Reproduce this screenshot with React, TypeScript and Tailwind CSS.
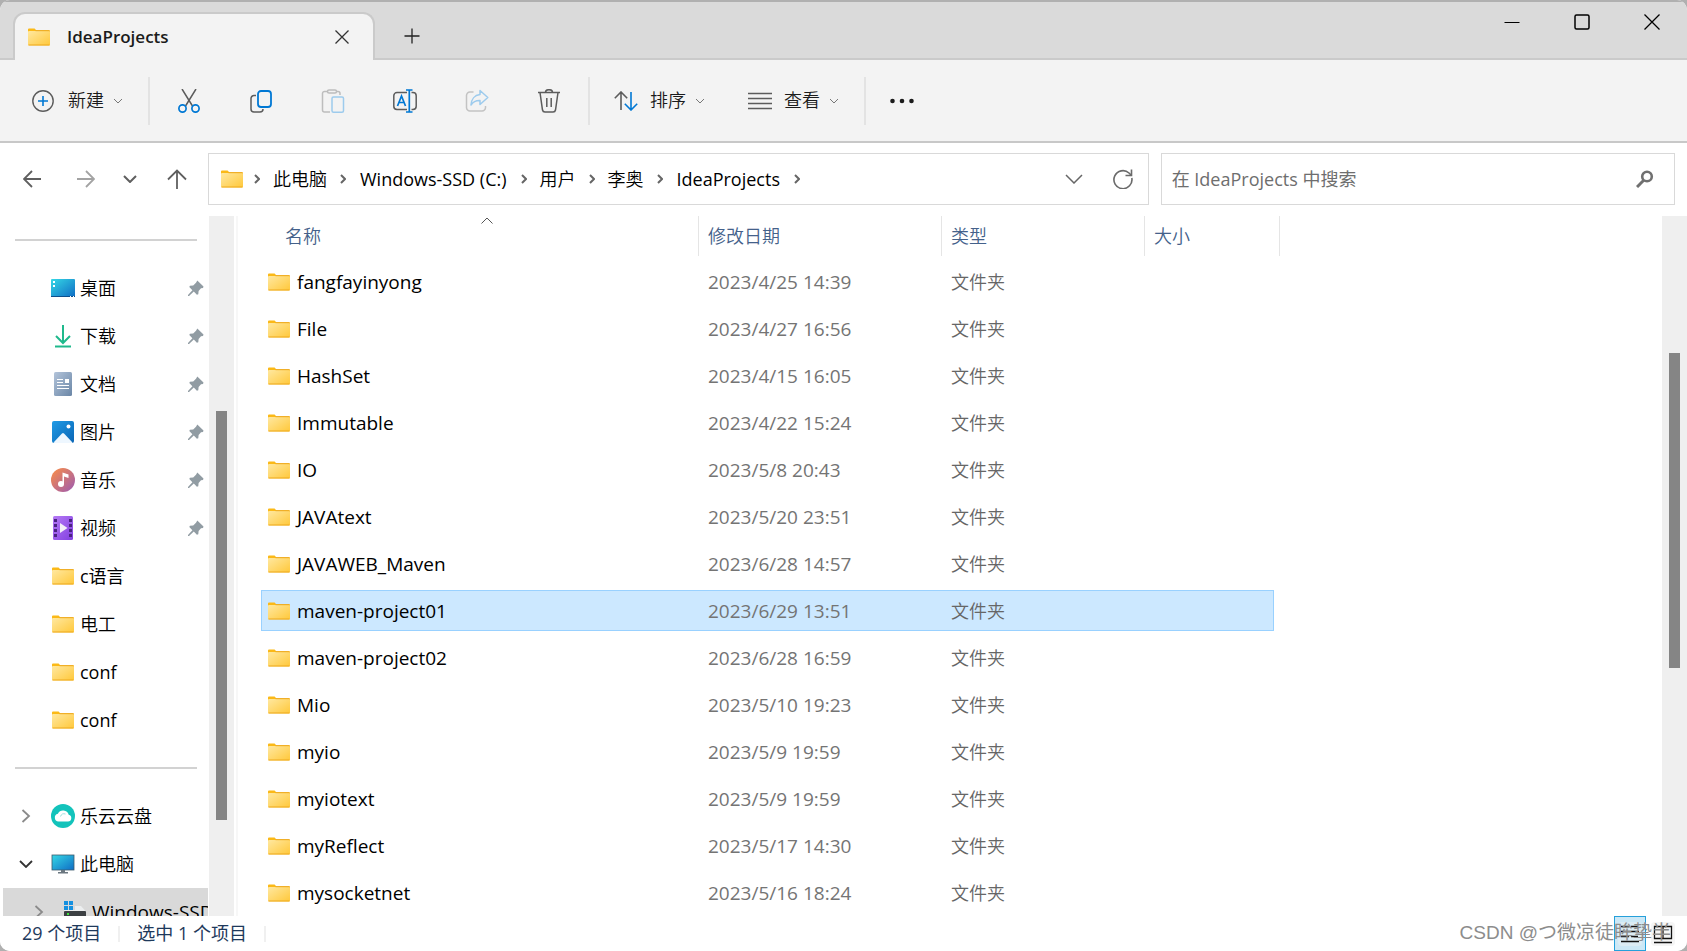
import React, { useState } from 'react';

const files = [
   { name: 'fangfayinyong', date: '2023/4/25 14:39' },
   { name: 'File', date: '2023/4/27 16:56' },
   { name: 'HashSet', date: '2023/4/15 16:05' },
   { name: 'Immutable', date: '2023/4/22 15:24' },
   { name: 'IO', date: '2023/5/8 20:43' },
   { name: 'JAVAtext', date: '2023/5/20 23:51' },
   { name: 'JAVAWEB_Maven', date: '2023/6/28 14:57' },
   { name: 'maven-project01', date: '2023/6/29 13:51' },
   { name: 'maven-project02', date: '2023/6/28 16:59' },
   { name: 'Mio', date: '2023/5/10 19:23' },
   { name: 'myio', date: '2023/5/9 19:59' },
   { name: 'myiotext', date: '2023/5/9 19:59' },
   { name: 'myReflect', date: '2023/5/17 14:30' },
   { name: 'mysocketnet', date: '2023/5/16 18:24' },
];

const FolderIcon = () => (
   <svg width="22" height="18" viewBox="0 0 22 18" className="shrink-0">
      <defs>
         <linearGradient id="folder" x1="0" y1="0" x2="1" y2="1">
            <stop offset="0" stopColor="#ffe8a0" />
            <stop offset="1" stopColor="#ffc83a" />
         </linearGradient>
      </defs>
      <path d="M0 1.5Q0 .5 1 .5h5.6l1.6 1.7H21q1 0 1 1V6H0z" fill="#fbb917" />
      <rect y="3" width="22" height="14.5" rx="1" fill="url(#folder)" />
      <path d="M7.5 2.7H21.5" stroke="#eda91f" />
      <path d="M.5 17h21" stroke="#eda91f" />
   </svg>
);

const PinIcon = () => (
   <svg width="16" height="16" viewBox="0 0 16 16" className="ml-auto shrink-0">
      <path d="M9.3.5 15.5 6.6 15 8l-2 .3-2.4 2.6-.3 3.3-1.4.5-3.1-3.1L1 16H0v-1l4.4-4.8L1.3 7.1l.6-1.4 3.3-.3L8 2.8z" fill="#919ca3" />
   </svg>
);

const DesktopIcon = () => (
   <svg width="24" height="18" viewBox="0 0 24 18">
      <defs>
         <linearGradient id="desk" x1="0" y1="0" x2="1" y2="1">
            <stop offset="0" stopColor="#35d8e6" />
            <stop offset="1" stopColor="#0f6cc4" />
         </linearGradient>
      </defs>
      <rect width="24" height="18" rx="1" fill="url(#desk)" />
      <path d="M0 17h24v1H0z" fill="#0d4f8c" />
      <path d="M2 2h2v2H2zM2 6h2v2H2zM19 17h1v1h-1zM22 17h1v1h-1z" fill="#fff" />
   </svg>
);

const DownloadIcon = () => (
   <svg width="24" height="24" viewBox="0 0 24 24" fill="none" stroke="#1fb98c" strokeWidth="2">
      <path d="M12 1v17.5M5 12l7 7 7-7" />
      <path d="M4 22.5h16" />
   </svg>
);

const DocumentIcon = () => (
   <svg width="24" height="24" viewBox="0 0 24 24">
      <defs>
         <linearGradient id="doc" x1="0" y1="0" x2="1" y2="1">
            <stop offset="0" stopColor="#b3c4da" />
            <stop offset="1" stopColor="#6a86a6" />
         </linearGradient>
      </defs>
      <rect x="3" width="18" height="24" rx="1.5" fill="url(#doc)" />
      <path d="M6 7.5h6M6 10.5h6M6 13.5h12M6 16.5h12" stroke="#fff" strokeWidth="1.2" />
      <rect x="14" y="7" width="4" height="4" fill="#fff" />
   </svg>
);

const PictureIcon = () => (
   <svg width="24" height="24" viewBox="0 0 24 24">
      <defs>
         <linearGradient id="pic" x1="0" y1="0" x2="1" y2="1">
            <stop offset="0" stopColor="#1f9be6" />
            <stop offset="1" stopColor="#0a65b5" />
         </linearGradient>
      </defs>
      <rect x="1" y="1" width="22" height="22" rx="2" fill="url(#pic)" />
      <path d="M2.5 22.5 11 13.5q1-1 2 0l8.5 9q-.5.5-1 .5h-17z" fill="#eef7ff" />
      <circle cx="17.5" cy="6.5" r="2" fill="#fff" />
   </svg>
);

const MusicIcon = () => (
   <svg width="24" height="24" viewBox="0 0 24 24">
      <defs>
         <linearGradient id="music" x1="0" y1="0" x2="1" y2="1">
            <stop offset=".1" stopColor="#f3894f" />
            <stop offset=".9" stopColor="#a55fa8" />
         </linearGradient>
      </defs>
      <circle cx="12" cy="12" r="12" fill="url(#music)" />
      <circle cx="10" cy="16" r="3" fill="#fff" />
      <path d="M11.5 16V4.5l6 2V10L13 8.5V16z" fill="#fff" />
   </svg>
);

const VideoIcon = () => (
   <svg width="24" height="24" viewBox="0 0 24 24">
      <defs>
         <linearGradient id="video" x1="0" y1="0" x2="1" y2="1">
            <stop offset="0" stopColor="#b57af5" />
            <stop offset="1" stopColor="#8240e0" />
         </linearGradient>
      </defs>
      <rect x="2" width="20" height="24" rx="1.5" fill="url(#video)" />
      <path d="M4.5 3v20M19.5 3v20" stroke="#4a2382" strokeWidth="3" strokeDasharray="3 2" />
      <path d="M9 7v10l7.5-5z" fill="#f3f0f7" />
   </svg>
);

const CloudIcon = () => (
   <svg width="24" height="24" viewBox="0 0 24 24">
      <circle cx="12" cy="12" r="12" fill="#13c3bb" />
      <path d="M7.5 17.5a3.9 3.9 0 0 1-.6-7.7 5.8 5.8 0 0 1 10.8 1 3.4 3.4 0 0 1-.7 6.7z" fill="#fff" />
      <path d="M9.5 12.5a4 4 0 0 1 5-2.5" stroke="#9be3df" fill="none" />
   </svg>
);

const MonitorIcon = () => (
   <svg width="24" height="20" viewBox="0 0 24 20">
      <rect x="1" y="1" width="22" height="15" fill="url(#desk)" stroke="#3d5a6b" strokeWidth=".8" />
      <path d="M10 16h4v2h3v1.5H7V18h3z" fill="#6b7780" />
   </svg>
);

const DriveIcon = () => (
   <svg width="24" height="24" viewBox="0 0 24 24">
      <path d="M12 6h6l4.5 5H1v-1h11z" fill="#eceeef" />
      <rect x="1" y="11" width="22" height="9" rx="1" fill="#3c4043" />
      <path d="M4 13h2v2H4z" fill="#3ce03c" />
      <path d="M1 1h4v4H1zM6 1h4v4H6zM1 6h4v4H1zM6 6h4v4H6z" fill="#1590e0" />
   </svg>
);

const quickAccess = [
   { label: '桌面', icon: <DesktopIcon />, pinned: true },
   { label: '下载', icon: <DownloadIcon />, pinned: true },
   { label: '文档', icon: <DocumentIcon />, pinned: true },
   { label: '图片', icon: <PictureIcon />, pinned: true },
   { label: '音乐', icon: <MusicIcon />, pinned: true },
   { label: '视频', icon: <VideoIcon />, pinned: true },
   { label: 'c语言', icon: <FolderIcon />, pinned: false },
   { label: '电工', icon: <FolderIcon />, pinned: false },
   { label: 'conf', icon: <FolderIcon />, pinned: false },
   { label: 'conf', icon: <FolderIcon />, pinned: false },
];

const crumbs = ['此电脑', 'Windows-SSD (C:)', '用户', '李奥', 'IdeaProjects'];

const SmallChevron = () => (
   <svg width="8" height="6" viewBox="0 0 8 6" fill="none" stroke="#777" className="shrink-0">
      <path d="m0 1 4 4 4-4" />
   </svg>
);

const CrumbChevron = () => (
   <svg width="6" height="10" viewBox="0 0 6 10" fill="none" stroke="#666" strokeWidth="2" className="mx-[7px] shrink-0">
      <path d="m1 1 4 4-4 4" />
   </svg>
);

const IconButton = ({ label, children }: { label: string; children: React.ReactNode }) => (
   <button type="button" aria-label={label} className="flex h-12 w-[72px] items-center justify-center">
      <svg width="24" height="24" viewBox="0 0 24 24" fill="none" stroke="#5c5c5c" strokeWidth="1.5">
         {children}
      </svg>
   </button>
);

const TitleBar = () => (
   <header className="flex h-[60px] shrink-0 items-stretch border-t-2 border-[#b0b0b0] bg-[#dadada] shadow-[inset_0_-2px_0_#cacaca]">
      <div className="mt-[10px] ml-[13px] flex w-[362px] items-center rounded-t-[12px] border-x-2 border-t-2 border-[#cacaca] bg-[#f3f3f3] pr-6 pl-[13px]">
         <FolderIcon />
         <span className="ml-[17px] text-[17px] font-semibold text-[#1b1b1b]">IdeaProjects</span>
         <button type="button" aria-label="关闭标签页" className="ml-auto">
            <svg width="14" height="14" viewBox="0 0 14 14" stroke="#333" strokeWidth="1.3">
               <path d="m.5.5 13 13M13.5.5l-13 13" />
            </svg>
         </button>
      </div>
      <button type="button" aria-label="新建标签页" className="ml-[29px] pt-[10px]">
         <svg width="16" height="16" viewBox="0 0 16 16" stroke="#222" strokeWidth="1.3">
            <path d="M8 .5v15M.5 8h15" />
         </svg>
      </button>
      <div className="ml-auto flex h-[40px]">
         <button type="button" aria-label="最小化" className="flex w-[70px] items-center justify-center">
            <svg width="16" height="16" viewBox="0 0 16 16" stroke="#000"><path d="M.5 8.5h15" /></svg>
         </button>
         <button type="button" aria-label="最大化" className="flex w-[70px] items-center justify-center">
            <svg width="16" height="16" viewBox="0 0 16 16" fill="none" stroke="#000" strokeWidth="1.5"><rect x="1" y="1" width="14" height="14" rx="1.5" /></svg>
         </button>
         <button type="button" aria-label="关闭" className="flex w-[70px] items-center justify-center">
            <svg width="16" height="16" viewBox="0 0 16 16" stroke="#000" strokeWidth="1.3"><path d="m.5.5 15 15M15.5.5l-15 15" /></svg>
         </button>
      </div>
   </header>
);

const Toolbar = () => (
   <div className="flex h-[83px] shrink-0 items-center border-b-2 border-[#c8c8c8] bg-[#f3f3f3] pl-8 text-[18px] font-[350] text-[#1b1b1b]">
      <button type="button" className="mr-[26px] flex items-center">
         <svg width="22" height="22" viewBox="0 0 22 22" fill="none">
            <circle cx="11" cy="11" r="10.2" stroke="#5c5c5c" strokeWidth="1.4" />
            <path d="M11 6v10M6 11h10" stroke="#0078d4" strokeWidth="1.6" />
         </svg>
         <span className="mr-[10px] ml-[14px]">新建</span>
         <SmallChevron />
      </button>
      <div className="h-12 w-[2px] bg-[#e3e3e3]" />
      <div className="ml-[3px] flex">
         <IconButton label="剪切">
            <path d="m5 0 10.5 17M19 0 8.5 17" />
            <g stroke="#0078d4" strokeWidth="1.7">
               <circle cx="5.5" cy="19.5" r="3.6" />
               <circle cx="18.5" cy="19.5" r="3.6" />
            </g>
         </IconButton>
         <IconButton label="复制">
            <path d="M7 6.5H5a3 3 0 0 0-3 3V20a3 3 0 0 0 3 3h6a3 3 0 0 0 3-3" />
            <rect x="9" y="2" width="13" height="16" rx="3" stroke="#0078d4" strokeWidth="1.8" />
         </IconButton>
         <IconButton label="粘贴">
            <g stroke="#bdbdbd">
               <path d="M7 2.5H3.5a2 2 0 0 0-2 2V21a2 2 0 0 0 2 2H9M15.5 2.5H17a2 2 0 0 1 2 2V6" />
               <rect x="6.5" y="1" width="9" height="3" rx="1.5" />
            </g>
            <rect x="11" y="8" width="11.5" height="15.2" rx="1.5" stroke="#9dcbed" />
         </IconButton>
         <IconButton label="重命名">
            <path d="M14 3.5H4A3.2 3.2 0 0 0 .8 6.7v10.6A3.2 3.2 0 0 0 4 20.5h10M18.5 3.5H20a3.2 3.2 0 0 1 3.2 3.2v10.6a3.2 3.2 0 0 1-3.2 3.2h-1.5" />
            <g stroke="#0078d4" strokeWidth="1.7">
               <path d="M16.3 1v22M13 1h6.5M13 23h6.5" />
               <path d="m4.5 17 4-10 4 10M6 13.5h5" />
            </g>
         </IconButton>
         <IconButton label="共享">
            <path d="M8.5 3H5a3.5 3.5 0 0 0-3.5 3.5v12A3.5 3.5 0 0 0 5 22h12a3.5 3.5 0 0 0 3.5-3.5V17" stroke="#c3c3c3" />
            <path d="M15 1.5 22.8 8.5 15 15.5v-4C10.5 11.3 8 13 6 16c.3-5.5 3.5-10 9-10.500z" stroke="#9dcbed" strokeLinejoin="round" />
         </IconButton>
         <IconButton label="删除">
            <path d="M1 3.5h22M8.5 3.5a3.5 2.8 0 0 1 7 0M3 3.5 5.5 21a2.5 2.5 0 0 0 2.4 2h8.2a2.5 2.5 0 0 0 2.4-2L21 3.5M9.8 9v9M14.2 9v9" />
         </IconButton>
      </div>
      <div className="ml-[3px] h-12 w-[2px] bg-[#e3e3e3]" />
      <button type="button" className="ml-6 flex items-center">
         <svg width="24" height="20" viewBox="0 0 24 20" fill="none" strokeWidth="1.6">
            <path d="M7 19V1M.8 7.2 7 1l6.2 6.2" stroke="#5c5c5c" />
            <path d="M17 1v18M10.8 12.8 17 19l6.2-6.2" stroke="#0078d4" />
         </svg>
         <span className="mr-[10px] ml-[12px]">排序</span>
         <SmallChevron />
      </button>
      <button type="button" className="ml-11 flex items-center">
         <svg width="24" height="18" viewBox="0 0 24 18" stroke="#5c5c5c" strokeWidth="1.5">
            <path d="M0 1.5h24M0 6.5h24M0 11.5h24M0 16.5h24" />
         </svg>
         <span className="mr-[10px] ml-[12px]">查看</span>
         <SmallChevron />
      </button>
      <div className="ml-[26px] h-12 w-[2px] bg-[#e3e3e3]" />
      <button type="button" aria-label="查看更多" className="ml-6">
         <svg width="24" height="6" viewBox="0 0 24 6" fill="#1b1b1b">
            <circle cx="2.5" cy="3" r="2.3" />
            <circle cx="12" cy="3" r="2.3" />
            <circle cx="21.5" cy="3" r="2.3" />
         </svg>
      </button>
   </div>
);

const AddressRow = () => (
   <div className="flex h-[73px] shrink-0 items-start bg-white pt-[10px] pr-3">
      <nav className="flex h-[52px] w-[208px] shrink-0 items-center pl-[23px]">
         <button type="button" aria-label="后退">
            <svg width="18" height="18" viewBox="0 0 18 18" fill="none" stroke="#5f5f5f" strokeWidth="1.8"><path d="M18 9H1M9 1 1 9l8 8" /></svg>
         </button>
         <button type="button" aria-label="前进" className="ml-9">
            <svg width="18" height="18" viewBox="0 0 18 18" fill="none" stroke="#a3a3a3" strokeWidth="1.8"><path d="M0 9h17M9 1l8 8-8 8" /></svg>
         </button>
         <button type="button" aria-label="最近位置" className="ml-7">
            <svg width="14" height="8" viewBox="0 0 14 8" fill="none" stroke="#5f5f5f" strokeWidth="2"><path d="m1 1 6 6 6-6" /></svg>
         </button>
         <button type="button" aria-label="上移" className="ml-[30px]">
            <svg width="20" height="20" viewBox="0 0 20 20" fill="none" stroke="#5f5f5f" strokeWidth="1.8"><path d="M10 20V1.5M1 10.5l9-9 9 9" /></svg>
         </button>
      </nav>
      <div className="flex h-[52px] min-w-0 flex-[911] items-center border border-[#d9d9d9] pr-[15px] pl-3 text-[18px]">
         <FolderIcon />
         <ol className="ml-1 flex items-center whitespace-nowrap">
            <li><CrumbChevron /></li>
            {crumbs.map((crumb) => (
               <li key={crumb} className="flex items-center">
                  <a href="#" className={/^\w/.test(crumb) ? 'mx-[7px]' : 'mx-[6px] font-[350]'}>{crumb}</a>
                  <CrumbChevron />
               </li>
            ))}
         </ol>
         <button type="button" aria-label="历史记录" className="ml-auto">
            <svg width="18" height="10" viewBox="0 0 18 10" fill="none" stroke="#666" strokeWidth="1.5"><path d="m1 1 8 8 8-8" /></svg>
         </button>
         <button type="button" aria-label="刷新" className="ml-[30px]">
            <svg width="20" height="20" viewBox="0 0 20 20" fill="none" stroke="#6a6a6a" strokeWidth="1.6">
               <path d="M18.8 9A9 9 0 1 1 16 4l2 2" />
               <path d="M18.5.5v6h-6" />
            </svg>
         </button>
      </div>
      <label className="ml-3 flex h-[52px] flex-[482] items-center border border-[#d9d9d9] pr-5 pl-[10px]">
         <input
            type="text"
            aria-label="搜索"
            placeholder="在 IdeaProjects 中搜索"
            className="w-full bg-transparent text-[18px] outline-none placeholder:text-[#6e6e6e]"
         />
         <svg width="18" height="18" viewBox="0 0 18 18" fill="none" stroke="#707070" className="shrink-0">
            <circle cx="11" cy="6.5" r="4.8" strokeWidth="2.6" />
            <path d="M7.5 10.5 1 17" strokeWidth="3" />
         </svg>
      </label>
   </div>
);

const Sidebar = () => (
   <aside className="flex w-[238px] shrink-0 border-r-2 border-[#f7f7f7]">
      <div className="flex min-w-0 flex-1 flex-col overflow-hidden text-[18px]">
         <hr className="mt-[23px] mr-[11px] mb-[23px] ml-[15px] border-t-2 border-[#d2d2d2]" />
         <ul>
            {quickAccess.map((item, i) => (
               <li key={i} className="flex h-12 items-center pr-1 pl-[51px]">
                  <span className="mr-[5px] flex w-6 shrink-0 justify-center">{item.icon}</span>
                  <span className={/^\w/.test(item.label) ? '' : 'font-[350]'}>{item.label}</span>
                  {item.pinned && <PinIcon />}
               </li>
            ))}
         </ul>
         <hr className="mt-[23px] mr-[11px] mb-[23px] ml-[15px] border-t-2 border-[#d2d2d2]" />
         <ul>
            <li className="flex h-12 items-center pl-[21px] font-[350]">
               <svg width="10" height="14" viewBox="0 0 10 14" fill="none" stroke="#8a8a8a" strokeWidth="1.8"><path d="m1.5 1 6.5 6-6.5 6" /></svg>
               <span className="mr-[5px] ml-5 flex w-6 justify-center"><CloudIcon /></span>
               乐云云盘
            </li>
            <li className="flex h-12 items-center pl-[19px] font-[350]">
               <svg width="14" height="8" viewBox="0 0 14 8" fill="none" stroke="#333" strokeWidth="1.8"><path d="m1 1 6 6 6-6" /></svg>
               <span className="mr-[5px] ml-[18px] flex w-6 justify-center"><MonitorIcon /></span>
               此电脑
            </li>
            <li className="ml-[3px] flex h-12 items-center overflow-hidden bg-[#d9d9d9] pl-[31px] text-[19px] whitespace-nowrap">
               <svg width="10" height="14" viewBox="0 0 10 14" fill="none" stroke="#8a8a8a" strokeWidth="1.8" className="shrink-0"><path d="m1.5 1 6.5 6-6.5 6" /></svg>
               <span className="mr-[5px] ml-[19px] flex w-6 shrink-0 justify-center"><DriveIcon /></span>
               Windows-SSD (C:)
            </li>
         </ul>
      </div>
      <div className="mr-[2px] ml-px flex w-[25px] justify-center bg-[#efefef] pt-[195px]">
         <div className="h-[409px] w-[11px] bg-[#858585]" />
      </div>
   </aside>
);

const FileTable = ({ selected, onSelect }: { selected: string; onSelect: (name: string) => void }) => (
   <main className="flex min-w-0 flex-1">
      <div className="min-w-0 flex-1 overflow-hidden pl-[23px]">
         <table className="w-[1019px] table-fixed border-separate border-spacing-0 text-left">
            <colgroup>
               <col className="w-[438px]" />
               <col className="w-[243px]" />
               <col className="w-[203px]" />
               <col className="w-[135px]" />
            </colgroup>
            <thead>
               <tr className="h-10 text-[18px] text-[#44618a]">
                  <th className="relative border-r border-[#e5e5e5] p-0 pl-6 font-[350]">
                     名称
                     <svg width="12" height="7" viewBox="0 0 12 7" fill="none" stroke="#555" className="absolute top-[1px] left-[220px]"><path d="m.5 6.5 5.5-5.5 5.5 5.5" /></svg>
                  </th>
                  <th className="border-r border-[#e5e5e5] p-0 pl-[9px] font-[350]">修改日期</th>
                  <th className="border-r border-[#e5e5e5] p-0 pl-[9px] font-[350]">类型</th>
                  <th className="border-r border-[#e5e5e5] p-0 pl-[9px] font-[350]">大小</th>
               </tr>
            </thead>
         </table>
         <table className="-mt-px w-[1013px] table-fixed border-separate border-spacing-x-0 border-spacing-y-[6px] text-left">
            <colgroup>
               <col className="w-[438px]" />
               <col className="w-[243px]" />
               <col className="w-[203px]" />
               <col className="w-[129px]" />
            </colgroup>
            <tbody>
               {files.map((file) => {
                  const cell = file.name === selected
                     ? 'border-y border-[#99d1ff] bg-[#cce8ff] first:border-l last:border-r'
                     : 'border-y border-transparent first:border-l last:border-r';
                  return (
                     <tr key={file.name} className="h-[41px]" onClick={() => onSelect(file.name)}>
                        <td className={`${cell} p-0 pl-[6px]`}>
                           <div className="flex items-center text-[19px]">
                              <FolderIcon />
                              <span className="ml-[7px] pt-[2px]">{file.name}</span>
                           </div>
                        </td>
                        <td className={`${cell} p-0 pt-[2px] pl-[9px] text-[19px] text-[#747474]`}>{file.date}</td>
                        <td className={`${cell} p-0 pt-[2px] pl-[9px] text-[18px] font-[350] text-[#666]`}>文件夹</td>
                        <td className={`${cell} p-0`} />
                     </tr>
                  );
               })}
            </tbody>
         </table>
      </div>
      <div className="flex w-[25px] shrink-0 justify-center bg-[#efefef] pt-[137px]">
         <div className="h-[315px] w-[11px] bg-[#858585]" />
      </div>
   </main>
);

const StatusBar = () => (
   <footer className="relative flex h-[35px] shrink-0 items-center bg-white pl-[22px] text-[18px] text-[#1e395b]">
      <span>29 个项目</span>
      <span className="mx-[17px] h-4 w-[2px] bg-[#f0f0f0]" />
      <span>选中 1 个项目</span>
      <span className="mx-[17px] h-4 w-[2px] bg-[#f0f0f0]" />
      <div className="mr-3 ml-auto flex h-full items-center gap-[5px]">
         <button type="button" aria-label="详细信息" className="flex h-full w-8 items-center justify-center border border-[#26a0da] bg-[#cce8f6]">
            <svg width="24" height="24" viewBox="0 0 24 24" stroke="#111" strokeWidth="1.3">
               <rect width="24" height="24" rx="4" fill="#dcecf4" stroke="none" />
               <path d="M3 4.5h8M13 4.5h7M3 9.5h18M3 14.5h8M13 14.5h7M3 19.5h18" />
            </svg>
         </button>
         <button type="button" aria-label="大缩略图" className="flex w-6 justify-center">
            <svg width="24" height="24" viewBox="0 0 24 24" fill="none" stroke="#111" strokeWidth="1.3">
               <rect width="24" height="24" rx="4" fill="#f5f5f5" stroke="none" />
               <path d="M3.5 4.5h17v12h-17zM12 4.5v12M3 20.5h18" />
            </svg>
         </button>
      </div>
      <span className="pointer-events-none absolute right-4 bottom-[6px] font-['Liberation_Sans','Noto_Sans_CJK_SC',sans-serif] text-[19px] leading-6 whitespace-nowrap text-[#8c8c8c]">CSDN @つ微凉徒眸挚半</span>
   </footer>
);

const App = () => {
   const [selected, setSelected] = useState('maven-project01');

   return (
      <div className="h-screen bg-[#b0b0b0] font-['Open_Sans','Noto_Sans_CJK_SC',sans-serif]">
         <div className="flex h-full flex-col overflow-hidden rounded-[10px] bg-white text-black">
            <TitleBar />
            <Toolbar />
            <AddressRow />
            <div className="flex min-h-0 flex-1">
               <Sidebar />
               <FileTable selected={selected} onSelect={setSelected} />
            </div>
            <StatusBar />
         </div>
      </div>
   );
};

export default App;
